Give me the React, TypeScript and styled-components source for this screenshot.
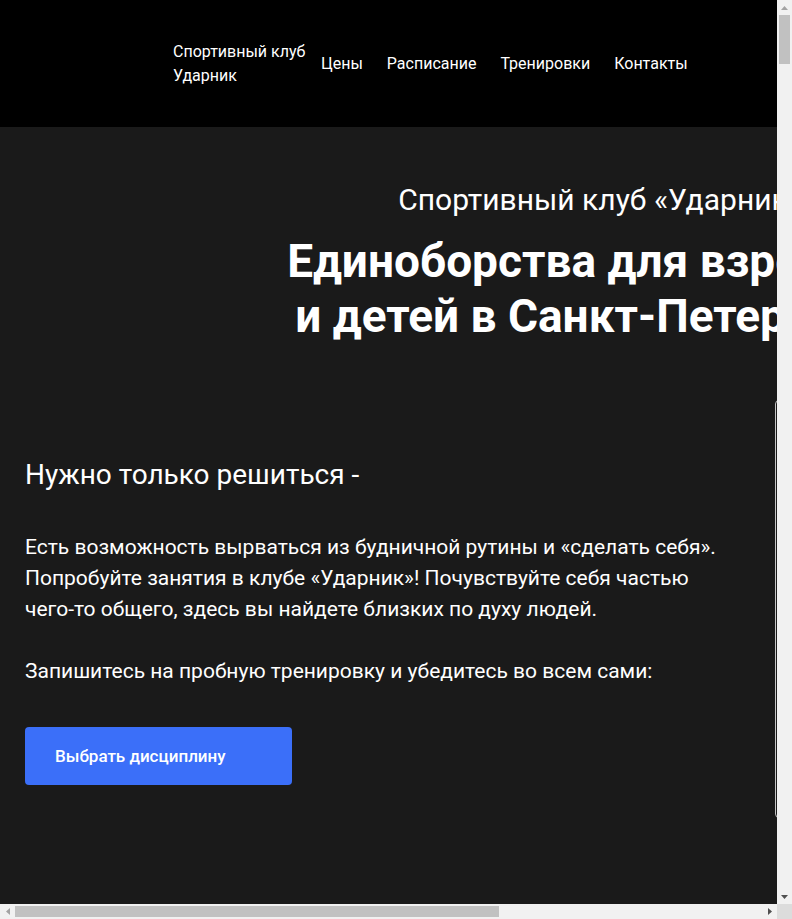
import React from 'react'
import styled, { createGlobalStyle } from 'styled-components'

const GlobalStyle = createGlobalStyle`
  html,
  body {
    margin: 0;
    padding: 0;
    background: #1a1a1a;
    overflow: hidden;
  }

  body {
    font-family: Roboto, 'Noto Sans', sans-serif;
    color: #fff;
  }

  * {
    box-sizing: border-box;
  }
`

const PAGE_WIDTH = 1200
const PAGE_HEIGHT = 16120
const VIEW_WIDTH = 777
const VIEW_HEIGHT = 904
const BAR = 15

// browser frame: scrolled view plus the two classic scrollbars
const Frame = styled.div`
  display: grid;
  grid-template-columns: 1fr ${BAR}px;
  grid-template-rows: 1fr ${BAR}px;
  width: 100vw;
  height: 100vh;
`

const Viewport = styled.div`
  overflow: hidden;
  background: #1a1a1a;
`

const ScrollTrack = styled.div<{ $vertical?: boolean }>`
  display: flex;
  flex-direction: ${p => (p.$vertical ? 'column' : 'row')};
  background: #f1f1f1;
`

const ArrowBox = styled.div`
  flex: 0 0 ${BAR}px;
  display: flex;
  align-items: center;
  justify-content: center;
`

const Thumb = styled.div<{ $vertical?: boolean }>`
  flex: 0 0 auto;
  margin: ${p => (p.$vertical ? '0 2px' : '2px 0')};
  background: #c1c1c1;
`

const Spacer = styled.div`
  flex: 1;
`

const Corner = styled.div`
  background: #dcdcdc;
`

const Page = styled.div`
  width: ${PAGE_WIDTH}px;
  min-height: ${PAGE_HEIGHT}px;
  background: #1a1a1a;
`

const Header = styled.header`
  height: 127px;
  background: #000;
  display: flex;
  align-items: center;
  padding-left: 173px;
`

const Logo = styled.a`
  width: 136px;
  font-size: 16px;
  line-height: 24px;
  color: #fff;
  text-decoration: none;
`

const Nav = styled.nav`
  display: flex;
  align-items: center;
`

const NavLink = styled.a`
  padding: 0 12px;
  font-size: 16px;
  line-height: 24px;
  color: #fff;
  text-decoration: none;
`

const Hero = styled.section`
  padding-top: 55px;
  text-align: center;
`

const HeroSubtitle = styled.p`
  margin: 0;
  font-size: 30px;
  line-height: 1.2;
  font-weight: 400;
`

const HeroTitle = styled.h1`
  margin: 16px 0 0;
  font-size: 46px;
  line-height: 1.2;
  font-weight: 700;
`

const About = styled.section`
  display: grid;
  grid-template-columns: 700px 400px;
  column-gap: 50px;
  padding: 56px 25px 0;
  align-items: start;
`

const AboutText = styled.div`
  padding-top: 58px;
`

const AboutHeading = styled.h2`
  margin: 0 0 40px;
  font-size: 28px;
  line-height: 1.2;
  font-weight: 400;
`

const AboutParagraph = styled.p`
  margin: 0;
  font-size: 21px;
  line-height: 31px;
`

const Button = styled.button`
  margin-top: 40px;
  width: 267px;
  height: 58px;
  padding: 0 30px;
  border: none;
  border-radius: 4px;
  background: #3b6ff9;
  color: #fff;
  font-family: Roboto, sans-serif;
  font-size: 17px;
  font-weight: 500;
  text-align: left;
  cursor: pointer;
`

const MediaFrame = styled.div`
  height: 418px;
  border: 1px solid #c4c4c4;
  border-radius: 4px;
`

type Dir = 'up' | 'down' | 'left' | 'right'

const arrowPoints: Record<Dir, string> = {
  up: '0,4 3.5,0 7,4',
  down: '0,0 7,0 3.5,4',
  left: '4,0 4,7 0,3.5',
  right: '0,0 4,3.5 0,7',
}

const Arrow = ({ dir, active }: { dir: Dir; active?: boolean }) => {
  const flat = dir === 'up' || dir === 'down'
  return (
    <ArrowBox>
      <svg width={flat ? 7 : 4} height={flat ? 4 : 7} viewBox={flat ? '0 0 7 4' : '0 0 4 7'}>
        <polygon points={arrowPoints[dir]} fill={active ? '#505050' : '#a3a3a3'} />
      </svg>
    </ArrowBox>
  )
}

const navItems = ['Цены', 'Расписание', 'Тренировки', 'Контакты']

const App: React.FC = () => {
  const vTrack = VIEW_HEIGHT - BAR * 2
  const hTrack = VIEW_WIDTH - BAR * 2
  const vThumb = Math.round((vTrack * VIEW_HEIGHT) / PAGE_HEIGHT)
  const hThumb = Math.round((hTrack * VIEW_WIDTH) / PAGE_WIDTH)

  return (
    <Frame>
      <GlobalStyle />
      <Viewport>
        <Page>
          <Header>
            <Logo href='#'>Спортивный клуб Ударник</Logo>
            <Nav>
              {navItems.map(item => (
                <NavLink key={item} href='#'>
                  {item}
                </NavLink>
              ))}
            </Nav>
          </Header>

          <Hero>
            <HeroSubtitle>Спортивный клуб «Ударник»</HeroSubtitle>
            <HeroTitle>
              Единоборства для взрослых
              <br />
              и детей в Санкт-Петербурге
            </HeroTitle>
          </Hero>

          <About>
            <AboutText>
              <AboutHeading>Нужно только решиться -</AboutHeading>
              <AboutParagraph>
                Есть возможность вырваться из будничной рутины и «сделать себя». Попробуйте
                занятия в клубе «Ударник»! Почувствуйте себя частью чего-то общего, здесь вы
                найдете близких по духу людей.
                <br />
                <br />
                Запишитесь на пробную тренировку и убедитесь во всем сами:
              </AboutParagraph>
              <Button type='button'>Выбрать дисциплину</Button>
            </AboutText>
            <MediaFrame />
          </About>
        </Page>
      </Viewport>

      <ScrollTrack $vertical>
        <Arrow dir='up' />
        <Thumb $vertical style={{ height: vThumb }} />
        <Spacer />
        <Arrow dir='down' active />
      </ScrollTrack>

      <ScrollTrack>
        <Arrow dir='left' />
        <Thumb style={{ width: hThumb }} />
        <Spacer />
        <Arrow dir='right' active />
      </ScrollTrack>

      <Corner />
    </Frame>
  )
}

export default App
